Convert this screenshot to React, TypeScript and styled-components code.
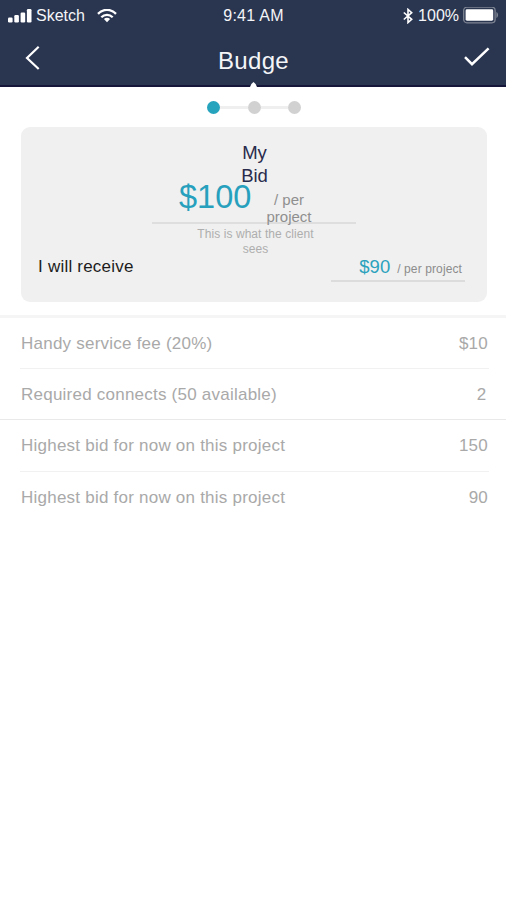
import React from "react";
import styled, { createGlobalStyle } from "styled-components";

const Global = createGlobalStyle`
  body { margin: 0; background: #fff; }
  * { box-sizing: border-box; }
`;

const Screen = styled.div`
  width: 506px;
  height: 900px;
  overflow: hidden;
  background: #fff;
  font-family: "Liberation Sans", Arial, sans-serif;
`;

const Header = styled.header`
  position: relative;
  height: 87px;
  color: #f4f5f8;
  background: #2a3550;
  border-bottom: 2px solid #15163a;
`;

const StatusBar = styled.div`
  display: grid;
  grid-template-columns: 1fr auto 1fr;
  align-items: center;
  height: 30px;
  padding: 0 7px 0 8px;
  font-size: 16px;
  line-height: 30px;
`;

const StatusGroup = styled.div<{ $end?: boolean }>`
  display: flex;
  align-items: center;
  justify-content: ${(p) => (p.$end ? "flex-end" : "flex-start")};
  height: 30px;
  svg { display: block; flex: none; }
`;

const Clock = styled.span`
  padding-top: 1px;
  letter-spacing: 0.25px;
`;

const Carrier = styled.span`
  margin: 0 12px 0 4px;
`;

const Percent = styled.span`
  margin: 0 4px 0 5px;
`;

const NavBar = styled.nav`
  display: grid;
  grid-template-columns: 60px 1fr 60px;
  height: 55px;
  padding: 0 16px 0 24px;
`;

const Title = styled.h1`
  margin: 0 0 0 -7px;
  font-size: 24px;
  font-weight: 400;
  line-height: 62px;
  letter-spacing: 0.35px;
  text-align: center;
`;

const IconButton = styled.button<{ $end?: boolean }>`
  display: flex;
  justify-content: ${(p) => (p.$end ? "flex-end" : "flex-start")};
  align-items: flex-start;
  padding: 15px 0 0;
  border: 0;
  background: none;
  color: #fff;
`;

const Notch = styled.span`
  position: absolute;
  left: 250px;
  bottom: -2px;
  width: 7px;
  height: 5px;
  background: #fff;
  clip-path: polygon(50% 0, 80% 40%, 100% 100%, 0 100%, 20% 40%);
`;

const Steps = styled.div`
  display: flex;
  align-items: center;
  justify-content: center;
  height: 40px;
  padding-left: 2px;
`;

const Step = styled.span<{ $active?: boolean }>`
  width: 13px;
  height: 13px;
  border-radius: 50%;
  background: ${(p) => (p.$active ? "#26a3bd" : "#d2d1d1")};
`;

const StepLine = styled.span`
  width: 27.5px;
  height: 3px;
  background: #efefef;
`;

const Card = styled.section`
  height: 175px;
  margin: 0 19px 0 21px;
  padding-top: 15px;
  border-radius: 9px;
  background: #f0f0f0;
`;

const CardTitle = styled.h2`
  width: 34px;
  height: 45px;
  margin: 0 auto;
  padding-left: 1px;
  font-size: 18.5px;
  font-weight: 400;
  line-height: 22.7px;
  text-align: center;
  color: #292b4c;
`;

const BidField = styled.div`
  display: flex;
  width: 204px;
  height: 46px;
  margin: -9px auto 0;
  padding-left: 27px;
  border-bottom: 2px solid #dedede;
`;

const BidAmount = styled.strong`
  width: 86px;
  font-size: 32.5px;
  font-weight: 400;
  line-height: 39px;
  color: #27a0bd;
`;

const BidUnit = styled.span`
  width: 48px;
  margin-top: 12.5px;
  font-size: 15px;
  line-height: 17.4px;
  text-align: center;
  color: #8f8f8f;
`;

const Note = styled.p`
  width: 124px;
  height: 30px;
  margin: 3px auto 0;
  padding-left: 3px;
  font-size: 12px;
  line-height: 15px;
  letter-spacing: 0.07px;
  text-align: center;
  color: #aeaeae;
`;

const ReceiveRow = styled.div`
  display: flex;
  justify-content: space-between;
  height: 26px;
  margin-top: -1px;
  padding: 0 22px 0 17px;
`;

const ReceiveLabel = styled.span`
  font-size: 17px;
  line-height: 21px;
  letter-spacing: 0.22px;
  color: #1c1c1c;
`;

const ReceiveField = styled.div`
  display: flex;
  justify-content: flex-end;
  align-items: baseline;
  gap: 7px;
  width: 134px;
  padding-right: 3px;
  border-bottom: 2px solid #dcdcdc;
  line-height: 22px;
`;

const ReceiveAmount = styled.span`
  font-size: 18.5px;
  color: #2ba2bd;
`;

const ReceiveUnit = styled.span`
  font-size: 12px;
  letter-spacing: 0.11px;
  line-height: 20px;
  color: #8c8c8c;
`;

const Group = styled.dl<{ $line: string; $thickness: number }>`
  margin: 0;
  border-top: ${(p) => p.$thickness}px solid ${(p) => p.$line};
`;

const Details = styled.div`
  margin-top: 13px;
`;

const Row = styled.div<{ $height: number }>`
  display: flex;
  justify-content: space-between;
  height: ${(p) => p.$height}px;
  margin: 0 17px 0 20px;
  padding: 0 1px;
  font-size: 17px;
  line-height: 51px;
  letter-spacing: 0.23px;
  color: #a9a9a9;
  & + & { border-top: 1px solid #f1f1f1; }
`;

const Term = styled.dt``;

const Value = styled.dd<{ $inset?: boolean }>`
  margin: 0 ${(p) => (p.$inset ? 1.5 : 0)}px 0 0;
`;

const SignalIcon = () => (
  <svg width="24" height="14" viewBox="0 0 24 14" fill="#fff">
    <rect x="0" y="8.5" width="4.6" height="5" rx="1.2" />
    <rect x="6.3" y="6" width="4.6" height="7.5" rx="1.2" />
    <rect x="12.6" y="3.5" width="4.6" height="10" rx="1.2" />
    <rect x="18.9" y="0" width="4.6" height="13.5" rx="1.2" />
  </svg>
);

const WifiIcon = () => (
  <svg width="20" height="14" viewBox="0 0 20 14" fill="none" stroke="#fff">
    <path d="M1 4.8C6.2-.4 13.8-.4 19 4.8" strokeWidth="2.4" />
    <path d="M4.3 8.2c3.2-3.2 8.2-3.2 11.4 0" strokeWidth="2.3" />
    <path d="M10 13.2 6.9 10c1.8-1.6 4.4-1.6 6.2 0z" fill="#fff" stroke="none" />
  </svg>
);

const BluetoothIcon = () => (
  <svg width="10" height="16" viewBox="0 0 10 16" fill="none" stroke="#fff" strokeWidth="1.6">
    <path d="M.8 4.5 8.7 11.3 5 14.6V1.4l3.7 3.3L.8 11.5" />
  </svg>
);

const BatteryIcon = () => (
  <svg width="36" height="17" viewBox="0 0 36 17">
    <rect x=".7" y=".2" width="31.4" height="15.6" rx="3.2" fill="none" stroke="#7d8492" strokeWidth="1.3" />
    <rect x="2.6" y="2.3" width="27.6" height="11.4" rx="1.4" fill="#fff" />
    <path d="M33.4 5c2.2.9 2.2 5.1 0 6z" fill="#7d8492" />
  </svg>
);

const BackIcon = () => (
  <svg width="17" height="26" viewBox="0 0 17 26" fill="none" stroke="#fff" strokeWidth="2.2">
    <path d="M14.7 1.8 3 13l11.7 11" />
  </svg>
);

const CheckIcon = () => (
  <svg width="27" height="22" viewBox="0 0 27 22" fill="none" stroke="#fff" strokeWidth="2.5">
    <path d="m2 12.2 7 7L25.6 3.4" />
  </svg>
);

const fees = [
  { label: "Handy service fee (20%)", value: "$10" },
  { label: "Required connects (50 available)", value: "2", inset: true },
];

const bids = [
  { label: "Highest bid for now on this project", value: "150" },
  { label: "Highest bid for now on this project", value: "90" },
];

export default function App() {
  return (
    <Screen>
      <Global />
      <Header>
        <StatusBar>
          <StatusGroup>
            <SignalIcon />
            <Carrier>Sketch</Carrier>
            <WifiIcon />
          </StatusGroup>
          <Clock>9:41 AM</Clock>
          <StatusGroup $end>
            <BluetoothIcon />
            <Percent>100%</Percent>
            <BatteryIcon />
          </StatusGroup>
        </StatusBar>
        <NavBar>
          <IconButton aria-label="Back"><BackIcon /></IconButton>
          <Title>Budge</Title>
          <IconButton $end aria-label="Confirm"><CheckIcon /></IconButton>
        </NavBar>
        <Notch />
      </Header>
      <Steps>
        <Step $active />
        <StepLine />
        <Step />
        <StepLine />
        <Step />
      </Steps>
      <Card>
        <CardTitle>My Bid</CardTitle>
        <BidField>
          <BidAmount>$100</BidAmount>
          <BidUnit>/ per project</BidUnit>
        </BidField>
        <Note>This is what the client sees</Note>
        <ReceiveRow>
          <ReceiveLabel>I will receive</ReceiveLabel>
          <ReceiveField>
            <ReceiveAmount>$90</ReceiveAmount>
            <ReceiveUnit>/ per project</ReceiveUnit>
          </ReceiveField>
        </ReceiveRow>
      </Card>
      <Details>
        <Group $line="#f5f5f5" $thickness={3}>
          {fees.map((r, i) => (
            <Row key={i} $height={i ? 51 : 50}>
              <Term>{r.label}</Term>
              <Value $inset={r.inset}>{r.value}</Value>
            </Row>
          ))}
        </Group>
        <Group $line="#e9e9e9" $thickness={1}>
          {bids.map((r, i) => (
            <Row key={i} $height={51}>
              <Term>{r.label}</Term>
              <Value>{r.value}</Value>
            </Row>
          ))}
        </Group>
      </Details>
    </Screen>
  );
}
